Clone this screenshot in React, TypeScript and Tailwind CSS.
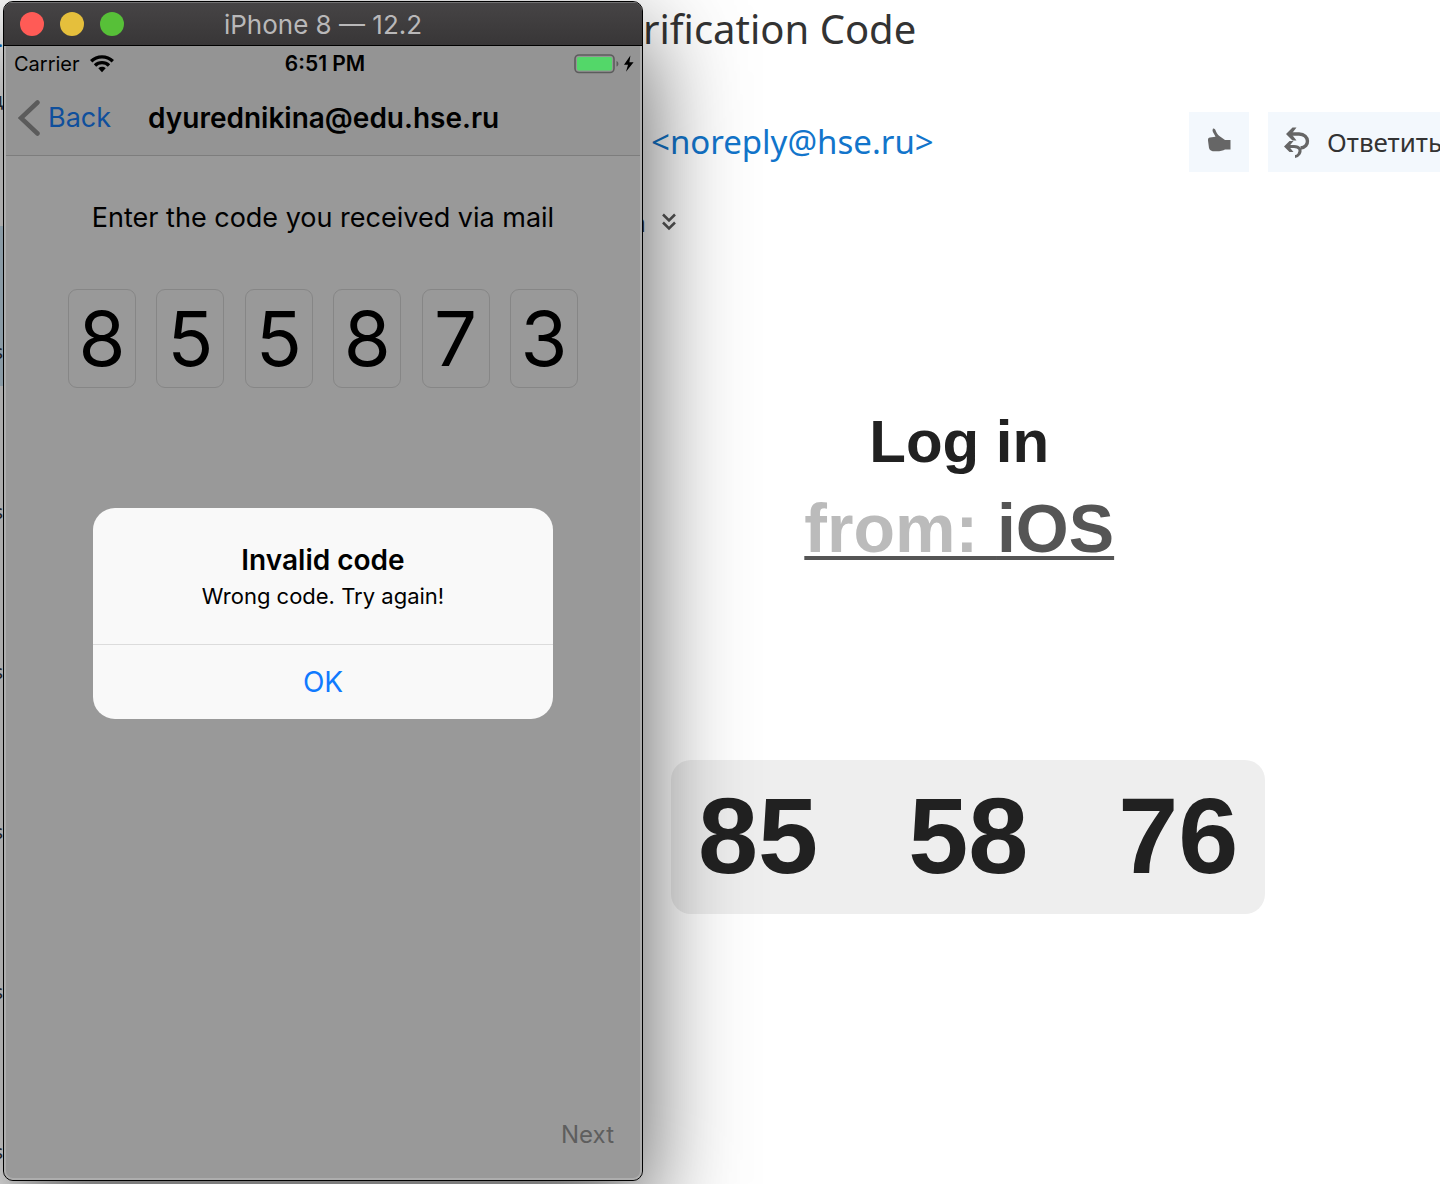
import React from "react";

const code = ["8", "5", "5", "8", "7", "3"];
const listRows = [0, 1, 2, 3, 4, 5];

function WifiIcon() {
  return (
    <svg width="24" height="18" viewBox="0 0 24 18" fill="none" stroke="#000" strokeWidth="3.4" aria-hidden="true">
      <path d="M1.2 6.2C7.2 .4 16.8 .4 22.8 6.2" />
      <path d="M5 10.5C8.9 6.7 15.1 6.7 19 10.5" />
      <path d="M8.3 13.2C10.5 11.3 13.5 11.3 15.7 13.2L12 17.2Z" fill="#000" stroke="none" />
    </svg>
  );
}

function BatteryIcon() {
  return (
    <svg width="62" height="20" viewBox="0 0 62 20" fill="none" aria-hidden="true">
      <rect x="1" y="1" width="39" height="17.5" rx="4" stroke="#5c5c5c" strokeWidth="1.6" />
      <rect x="3" y="3" width="35" height="13.5" rx="2" fill="#53d769" />
      <path d="M42.5 7C45 7.6 45 12 42.5 12.6Z" fill="#5c5c5c" />
      <path d="M56.4 1.6L50 10.8h4l-2 7L59.6 8.3h-4.2Z" fill="#000" />
    </svg>
  );
}

function ThumbIcon() {
  return (
    <svg width="24" height="24" viewBox="0 0 24 24" fill="#666" aria-hidden="true">
      <path d="M6 .5C7.5 .3 8.5 1.6 9 3.5C10 6 12 8 14.5 9.5L18 12H23.5V21.5H18C16 22.8 12.5 23.5 8 23.3C4.5 23.3 2.5 22.5 2 20L1 12.5C.9 10.5 1.5 9.8 3 9.5L8.5 8.8C7.5 6.5 5.5 4 5.5 2.2Z" />
    </svg>
  );
}

function ReplyAllIcon() {
  return (
    <svg width="26" height="32" viewBox="0 0 26 32" fill="none" stroke="#666" strokeWidth="3.4" aria-hidden="true">
      <path d="M5 8H15C26 8.5 26 21.5 16.5 22" />
      <path d="M3 20.5H10C15.5 20.5 17.5 24 15 28C14 29.5 12.5 30.5 11 30.5" strokeWidth="3" />
      <path d="M2 8L8.5 1.5H12.5L7.5 8L12.5 14.5H8.5Z" fill="#666" stroke="none" />
      <path d="M0 20.5L5.5 15H9.5L5 20.5L9.5 26H5.5Z" fill="#666" stroke="none" />
    </svg>
  );
}

function MailListEdge() {
  return (
    <div className="w-[3px] shrink-0 overflow-hidden bg-white text-[20px] leading-6 text-[#333]" aria-hidden="true">
      <div className="flex h-[88px] justify-end pt-7 text-[#0b6cc4]">.</div>
      <div className="flex h-[138px] justify-end">ц</div>
      {listRows.map((row) => (
        <div
          key={row}
          className={
            row === 0
              ? "flex h-40 justify-end bg-[#cde6f7] pt-[114px]"
              : "flex h-40 justify-end pt-[114px] last:h-36"
          }
        >
          s
        </div>
      ))}
    </div>
  );
}

function Alert() {
  return (
    <div className="absolute inset-0 flex items-center justify-center pt-[3px]">
      <div
        role="alertdialog"
        aria-labelledby="alert-title"
        aria-describedby="alert-text"
        className="w-[460px] overflow-hidden rounded-[22px] bg-[#f9f9f9] text-center"
      >
        <div className="px-6 pt-8 pb-8">
          <h2 id="alert-title" className="text-[28px] leading-10 font-semibold text-black">
            Invalid code
          </h2>
          <p id="alert-text" className="text-[22px] leading-8 text-black">
            Wrong code. Try again!
          </p>
        </div>
        <button type="button" className="block h-[75px] w-full border-t border-[#dcdcdc] text-[28px] text-[#107aff]">
          OK
        </button>
      </div>
    </div>
  );
}

function Simulator() {
  return (
    <section className="relative z-10 mt-px mb-[3px] flex w-[640px] shrink-0 flex-col overflow-hidden rounded-[10px] border border-black bg-[#999] font-['Inter',sans-serif] text-black shadow-[0_36px_100px_rgba(0,0,0,0.68)]">
      <header className="flex h-11 items-center border-t border-b border-t-[#727172] border-b-black bg-linear-to-b from-[#464445] to-[#383637] px-4">
        <div className="flex flex-1 gap-4">
          <button type="button" aria-label="Close" className="size-6 rounded-full bg-[#ff5b56]" />
          <button type="button" aria-label="Minimize" className="size-6 rounded-full bg-[#e5bf3c]" />
          <button type="button" aria-label="Zoom" className="size-6 rounded-full bg-[#57c038]" />
        </div>
        <h1 className="pt-[2px] text-[26px] leading-8 text-[#b9b8b9]">iPhone 8 — 12.2</h1>
        <div className="flex-1" />
      </header>
      <div className="relative flex flex-1 flex-col rounded-b-[9px] border-x-2 border-b-2 border-[#adadad]">
        <div className="flex h-[35px] items-center bg-[#949494] pr-1 pl-2 text-[21px] leading-7">
          <div className="flex flex-1 items-center gap-[10px] text-[20px]">
            <span>Carrier</span>
            <WifiIcon />
          </div>
          <span className="font-semibold">6:51 PM</span>
          <div className="flex flex-1 justify-end">
            <BatteryIcon />
          </div>
        </div>
        <nav className="flex h-[75px] items-center border-b border-[#7d7d7d] bg-[#949494] pl-3 text-[28px] leading-9">
          <button type="button" className="flex items-center gap-2 text-[27px] text-[#0f4f9c]">
            <svg width="22" height="36" viewBox="0 0 22 36" fill="none" stroke="#5b5b5b" strokeWidth="4.5" strokeLinecap="round" aria-hidden="true">
              <path d="M19.5 2.5L3 18L19.5 33.5" />
            </svg>
            Back
          </button>
          <h2 className="ml-[37px] font-semibold">dyurednikina@edu.hse.ru</h2>
        </nav>
        <main className="flex flex-1 flex-col items-center">
          <p className="mt-11 text-[27px] leading-9">Enter the code you received via mail</p>
          <div className="mt-[53px] flex w-[510px] justify-between">
            {code.map((digit, i) => (
              <input
                key={i}
                aria-label={`Digit ${i + 1}`}
                defaultValue={digit}
                maxLength={1}
                className="h-[99px] w-[68px] rounded-[9px] border border-[#868686] bg-transparent p-0 pb-[2px] text-center text-[76px] leading-none"
              />
            ))}
          </div>
          <button type="button" className="mt-auto mr-[26px] mb-[25px] self-end text-[24px] leading-9 text-[#5e5e5e]">
            Next
          </button>
        </main>
        <Alert />
      </div>
    </section>
  );
}

function Mail() {
  return (
    <article className="min-w-0 flex-1 overflow-hidden bg-white font-['Noto_Sans',sans-serif] text-[#333]">
      <h2 className="pt-px text-[40px] leading-[56px]">rification Code</h2>
      <div className="mt-[55px] flex items-center pl-2">
        <a href="mailto:noreply@hse.ru" className="text-[33px] leading-[60px] text-[#1275cb]">
          &lt;noreply@hse.ru&gt;
        </a>
        <div className="ml-auto flex shrink-0 gap-[19px]">
          <button type="button" aria-label="Like" className="flex h-[60px] w-[60px] items-start justify-center bg-[#f3f8fd] pt-4">
            <ThumbIcon />
          </button>
          <button type="button" className="flex h-[60px] w-[172px] items-center gap-[17px] overflow-hidden bg-[#f3f8fd] pl-4 text-[26px] whitespace-nowrap">
            <span className="shrink-0">
              <ReplyAllIcon />
            </span>
            Ответить
          </button>
        </div>
      </div>
      <div className="mt-8 flex h-9 items-center gap-4 text-[26px] leading-9">
        <span className="flex w-[3px] justify-end overflow-hidden">а</span>
        <button type="button" aria-label="Show details">
          <svg width="14" height="18" viewBox="0 0 14 18" fill="none" stroke="#555" strokeWidth="2.5" aria-hidden="true">
            <path d="M1 1.5L7 7.5L13 1.5M1 9.5L7 15.5L13 9.5" />
          </svg>
        </button>
      </div>
      <div className="mt-[162px] ml-7 w-fit font-['Liberation_Sans',sans-serif] font-bold text-[#212121]">
        <div className="mr-[18px] text-center">
          <h3 className="text-[60px] leading-[80px]">Log in</h3>
          <p className="text-[68px] leading-[92px] text-[#555] underline decoration-[#555] decoration-4 underline-offset-[4px] [text-decoration-skip-ink:none]">
            <span className="text-[#bbb]">from: </span>iOS
          </p>
        </div>
        <p className="mt-[186px] rounded-[20px] bg-[#eee] px-[27px] pb-[2px] text-[108px] leading-[152px] whitespace-pre">85   58   76</p>
      </div>
    </article>
  );
}

export default function App() {
  return (
    <div className="flex min-h-screen overflow-hidden bg-white">
      <MailListEdge />
      <Simulator />
      <Mail />
    </div>
  );
}
